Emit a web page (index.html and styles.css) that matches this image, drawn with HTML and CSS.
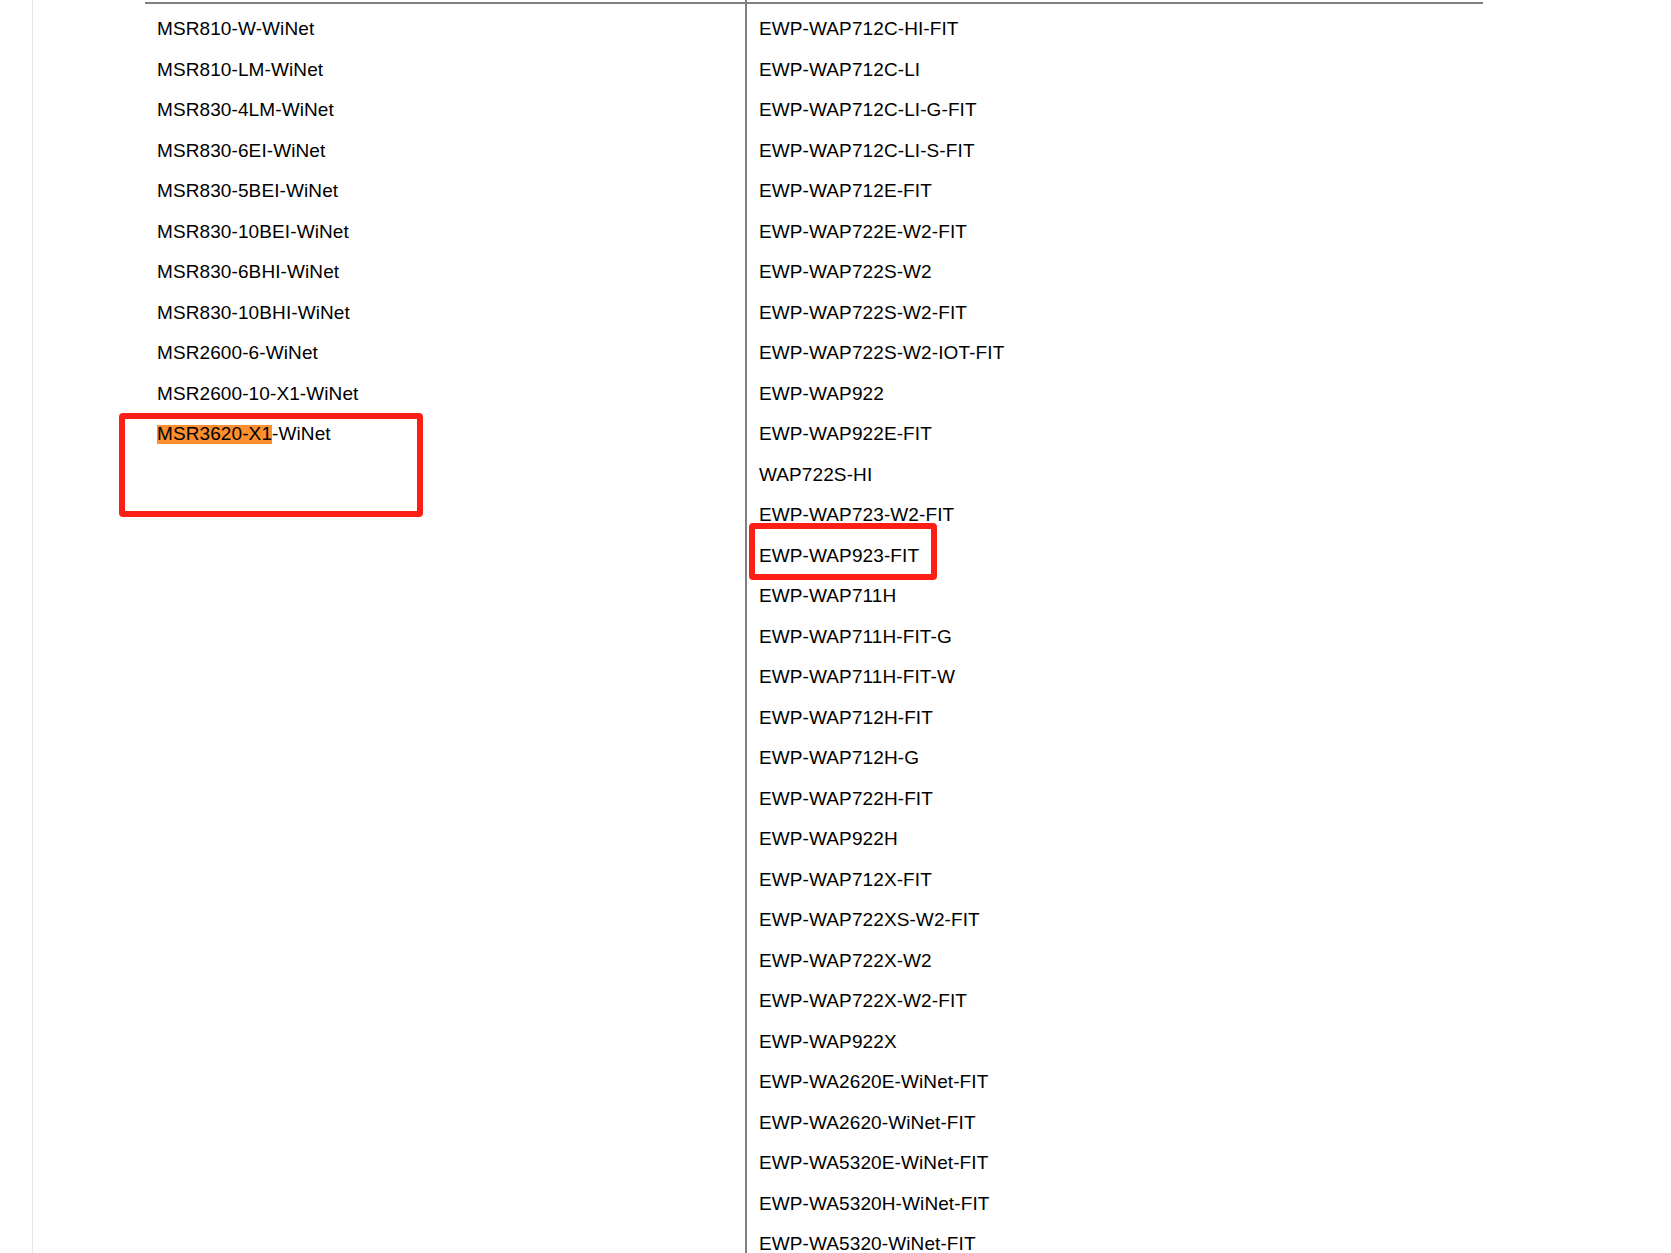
FILE: index.html
```html
<!DOCTYPE html>
<html lang="en">
<head>
<meta charset="utf-8">
<title>Models</title>
<link rel="stylesheet" href="styles.css">
</head>
<body>
<div class="page">
  <div class="table">
    <div class="col col-left">
      <div class="col-inner">
        <div class="row">MSR810-W-WiNet</div>
        <div class="row">MSR810-LM-WiNet</div>
        <div class="row">MSR830-4LM-WiNet</div>
        <div class="row">MSR830-6EI-WiNet</div>
        <div class="row">MSR830-5BEI-WiNet</div>
        <div class="row">MSR830-10BEI-WiNet</div>
        <div class="row">MSR830-6BHI-WiNet</div>
        <div class="row">MSR830-10BHI-WiNet</div>
        <div class="row">MSR2600-6-WiNet</div>
        <div class="row">MSR2600-10-X1-WiNet</div>
        <div class="row"><span class="hl">MSR3620-X1</span>-WiNet</div>
      </div>
    </div>
    <div class="col col-right">
      <div class="col-inner">
        <div class="row">EWP-WAP712C-HI-FIT</div>
        <div class="row">EWP-WAP712C-LI</div>
        <div class="row">EWP-WAP712C-LI-G-FIT</div>
        <div class="row">EWP-WAP712C-LI-S-FIT</div>
        <div class="row">EWP-WAP712E-FIT</div>
        <div class="row">EWP-WAP722E-W2-FIT</div>
        <div class="row">EWP-WAP722S-W2</div>
        <div class="row">EWP-WAP722S-W2-FIT</div>
        <div class="row">EWP-WAP722S-W2-IOT-FIT</div>
        <div class="row">EWP-WAP922</div>
        <div class="row">EWP-WAP922E-FIT</div>
        <div class="row">WAP722S-HI</div>
        <div class="row">EWP-WAP723-W2-FIT</div>
        <div class="row">EWP-WAP923-FIT</div>
        <div class="row">EWP-WAP711H</div>
        <div class="row">EWP-WAP711H-FIT-G</div>
        <div class="row">EWP-WAP711H-FIT-W</div>
        <div class="row">EWP-WAP712H-FIT</div>
        <div class="row">EWP-WAP712H-G</div>
        <div class="row">EWP-WAP722H-FIT</div>
        <div class="row">EWP-WAP922H</div>
        <div class="row">EWP-WAP712X-FIT</div>
        <div class="row">EWP-WAP722XS-W2-FIT</div>
        <div class="row">EWP-WAP722X-W2</div>
        <div class="row">EWP-WAP722X-W2-FIT</div>
        <div class="row">EWP-WAP922X</div>
        <div class="row">EWP-WA2620E-WiNet-FIT</div>
        <div class="row">EWP-WA2620-WiNet-FIT</div>
        <div class="row">EWP-WA5320E-WiNet-FIT</div>
        <div class="row">EWP-WA5320H-WiNet-FIT</div>
        <div class="row">EWP-WA5320-WiNet-FIT</div>
      </div>
    </div>
  </div>
  <div class="mark mark-left"></div>
  <div class="mark mark-right"></div>
</div>
</body>
</html>
```
FILE: styles.css
```css
html, body {
  margin: 0;
  padding: 0;
  background: #ffffff;
}

body {
  width: 1671px;
  height: 1253px;
  overflow: hidden;
  font-family: "Liberation Sans", Arial, sans-serif;
  color: #000000;
}

.page {
  position: relative;
  margin-left: 32px;
  height: 1253px;
  border-left: 1px solid #e6e6e6;
}

.table {
  display: flex;
  margin-left: 112px;
  width: 1338px;
  height: 100%;
}

.col {
  padding-top: 2px;
}

.col-left {
  width: 600px;
}

.col-right {
  flex: 1;
  border-left: 2px solid #808080;
}

.col-inner {
  border-top: 2px solid #808080;
  padding-top: 5px;
}

.row {
  height: 40.5px;
  line-height: 40.5px;
  padding-left: 12px;
  font-size: 19px;
  letter-spacing: 0.1px;
  white-space: nowrap;
}

.hl {
  background: linear-gradient(to bottom, transparent 2px, #fd8f2f 2px);
}

.mark {
  position: absolute;
  border: 6px solid #fb1f15;
  border-radius: 4px;
  box-sizing: border-box;
}

.mark-left {
  left: 86px;
  top: 413px;
  width: 304px;
  height: 104px;
}

.mark-right {
  left: 716px;
  top: 523px;
  width: 188px;
  height: 57px;
}
```
